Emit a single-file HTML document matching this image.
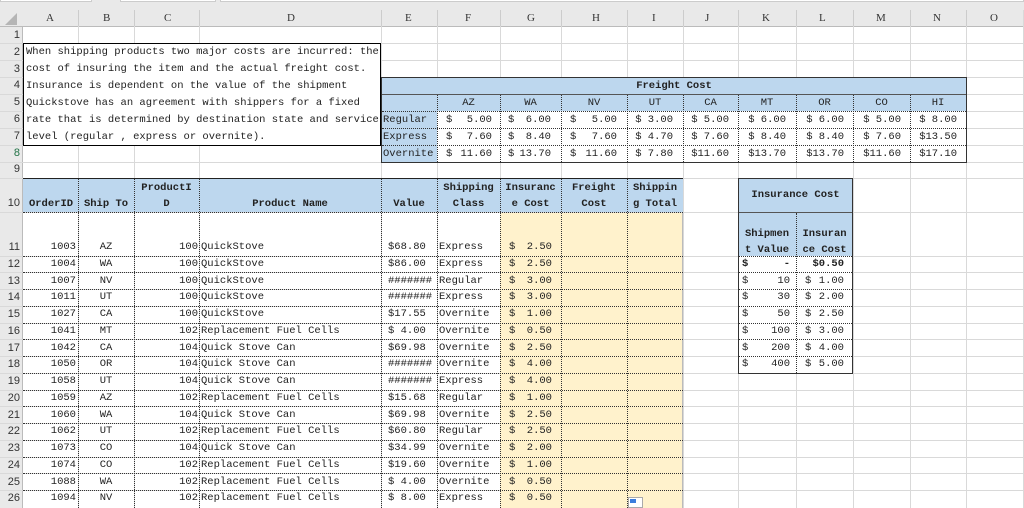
<!DOCTYPE html>
<html><head><meta charset="utf-8"><style>
*{margin:0;padding:0;box-sizing:border-box}
body{width:1024px;height:508px;overflow:hidden;background:#fff;position:relative;font-family:"Liberation Mono","Noto Sans CJK SC",monospace;font-size:10.5px;color:#222}
div{position:absolute}
.v{top:10px;height:498px;width:1px;background:#d9d9d9}
.h{left:0;width:1024px;height:1px;background:#d9d9d9}
.r{left:0;width:1024px;height:17px;line-height:17px;white-space:nowrap}
.r div{top:0;height:17px;white-space:pre}
.n{left:0;width:20px;text-align:right;color:#333;font-family:"Liberation Sans",sans-serif;font-size:11px}
.ca{left:23px;width:53px;text-align:right}
.cb{left:78px;width:56px;text-align:center}
.cc{left:134px;width:64px;text-align:right}
.cd{left:201px}
.ce{left:388px}
.cf{left:439px}
.gs{left:509px}
.gn{left:500px;width:52px;text-align:right}
.ks{left:742px}.kn{left:738px;width:52px;text-align:right}
.ls{left:805px}.ln{left:796px;width:48px;text-align:right}
.b{font-weight:bold}
.dv{width:0;border-left:1px dotted #333}
.dh{height:0;border-top:1px dotted #333}
.hd{font-weight:bold;text-align:center;line-height:16px;white-space:pre}
</style></head><body>
<div style="left:0;top:0;width:1024px;height:27px;background:#e9e9e9"></div>
<div style="left:0;top:0;width:92px;height:2px;background:#fff;border:1px solid #ccc;border-top:none"></div>
<div style="left:120px;top:0;width:96px;height:2px;background:#fff;border:1px solid #ccc;border-top:none"></div>
<div style="left:220px;top:0;width:804px;height:2px;background:#fff;border:1px solid #ccc;border-top:none"></div>
<div style="left:0;top:26px;width:1024px;height:1px;background:#bbb"></div>
<div style="left:0;top:27px;width:23px;height:481px;background:#e9e9e9;border-right:1px solid #bbb"></div>
<div style="left:5px;top:13px;width:0;height:0;border-left:12px solid transparent;border-bottom:12px solid #b5b5b5"></div>
<div class="v" style="left:78px"></div><div class="v" style="left:134px"></div><div class="v" style="left:199px"></div><div class="v" style="left:381px"></div><div class="v" style="left:437px"></div><div class="v" style="left:500px"></div><div class="v" style="left:561px"></div><div class="v" style="left:627px"></div><div class="v" style="left:683px"></div><div class="v" style="left:738px"></div><div class="v" style="left:796px"></div><div class="v" style="left:853px"></div><div class="v" style="left:910px"></div><div class="v" style="left:966px"></div><div class="v" style="left:1023px"></div>
<div class="h" style="top:43px"></div><div class="h" style="top:60px"></div><div class="h" style="top:77px"></div><div class="h" style="top:94px"></div><div class="h" style="top:111px"></div><div class="h" style="top:128px"></div><div class="h" style="top:145px"></div><div class="h" style="top:162px"></div><div class="h" style="top:178px"></div><div class="h" style="top:212px"></div><div class="h" style="top:256px"></div><div class="h" style="top:272px"></div><div class="h" style="top:289px"></div><div class="h" style="top:306px"></div><div class="h" style="top:323px"></div><div class="h" style="top:339px"></div><div class="h" style="top:356px"></div><div class="h" style="top:373px"></div><div class="h" style="top:390px"></div><div class="h" style="top:406px"></div><div class="h" style="top:423px"></div><div class="h" style="top:440px"></div><div class="h" style="top:457px"></div><div class="h" style="top:473px"></div><div class="h" style="top:490px"></div>
<div style="top:10px;left:23px;width:1001px;height:16px;line-height:16px;font-family:'Liberation Serif',serif;font-size:11px;color:#333">
<div style="left:23px;top:0">A</div><div style="left:80px;top:0">B</div><div style="left:141px;top:0">C</div><div style="left:264px;top:0">D</div><div style="left:382px;top:0">E</div><div style="left:442px;top:0">F</div><div style="left:504px;top:0">G</div><div style="left:569px;top:0">H</div><div style="left:629px;top:0">I</div><div style="left:682px;top:0">J</div><div style="left:739px;top:0">K</div><div style="left:796px;top:0">L</div><div style="left:853px;top:0">M</div><div style="left:910px;top:0">N</div><div style="left:967px;top:0">O</div></div>
<div style="left:78px;top:10px;width:1px;height:16px;background:#ccc"></div><div style="left:134px;top:10px;width:1px;height:16px;background:#ccc"></div><div style="left:199px;top:10px;width:1px;height:16px;background:#ccc"></div><div style="left:381px;top:10px;width:1px;height:16px;background:#ccc"></div><div style="left:437px;top:10px;width:1px;height:16px;background:#ccc"></div><div style="left:500px;top:10px;width:1px;height:16px;background:#ccc"></div><div style="left:561px;top:10px;width:1px;height:16px;background:#ccc"></div><div style="left:627px;top:10px;width:1px;height:16px;background:#ccc"></div><div style="left:683px;top:10px;width:1px;height:16px;background:#ccc"></div><div style="left:738px;top:10px;width:1px;height:16px;background:#ccc"></div><div style="left:796px;top:10px;width:1px;height:16px;background:#ccc"></div><div style="left:853px;top:10px;width:1px;height:16px;background:#ccc"></div><div style="left:910px;top:10px;width:1px;height:16px;background:#ccc"></div><div style="left:966px;top:10px;width:1px;height:16px;background:#ccc"></div>

<div style="left:23px;top:43px;width:358px;height:103px;background:#fff;border:1px solid #000;padding:0 0 0 2px;line-height:16.9px;white-space:pre;color:#222">When shipping products two major costs are incurred: the
cost of insuring the item and the actual freight cost.
Insurance is dependent on the value of the shipment
Quickstove has an agreement with shippers for a fixed
rate that is determined by destination state and service
level (regular , express or overnite).</div>

<div style="left:381px;top:77px;width:586px;height:86px;background:#fff;border:1px solid #333"></div>
<div style="left:382px;top:78px;width:584px;height:33px;background:#bdd7ee"></div>
<div style="left:382px;top:111px;width:55px;height:51px;background:#bdd7ee"></div>
<div style="left:382px;top:94px;width:584px;height:1px;background:#555"></div>
<div class="dh" style="left:382px;top:111px;width:584px"></div>
<div class="dh" style="left:382px;top:128px;width:584px"></div>
<div class="dh" style="left:382px;top:145px;width:584px"></div>
<div class="dv" style="left:437px;top:95px;height:67px"></div><div class="dv" style="left:500px;top:95px;height:67px"></div><div class="dv" style="left:561px;top:95px;height:67px"></div><div class="dv" style="left:627px;top:95px;height:67px"></div><div class="dv" style="left:683px;top:95px;height:67px"></div><div class="dv" style="left:738px;top:95px;height:67px"></div><div class="dv" style="left:796px;top:95px;height:67px"></div><div class="dv" style="left:853px;top:95px;height:67px"></div><div class="dv" style="left:910px;top:95px;height:67px"></div>
<div class="hd" style="left:381px;top:78px;width:586px">Freight Cost</div>
<div class="r" style="top:95px;text-align:center"><div style="left:437px;width:63px">AZ</div><div style="left:500px;width:61px">WA</div><div style="left:561px;width:66px">NV</div><div style="left:627px;width:56px">UT</div><div style="left:683px;width:55px">CA</div><div style="left:738px;width:58px">MT</div><div style="left:796px;width:57px">OR</div><div style="left:853px;width:57px">CO</div><div style="left:910px;width:56px">HI</div></div>
<div class="r" style="top:112px"><div style="left:383px">Regular</div><div style="left:446px">$</div><div style="left:437px;width:55px;text-align:right">5.00</div><div style="left:508px">$</div><div style="left:500px;width:51px;text-align:right">6.00</div><div style="left:570px">$</div><div style="left:561px;width:56px;text-align:right">5.00</div><div style="left:627px;width:46px;text-align:right">$ 3.00</div><div style="left:683px;width:46px;text-align:right">$ 5.00</div><div style="left:738px;width:48px;text-align:right">$ 6.00</div><div style="left:796px;width:48px;text-align:right">$ 6.00</div><div style="left:853px;width:48px;text-align:right">$ 5.00</div><div style="left:910px;width:47px;text-align:right">$ 8.00</div></div>
<div class="r" style="top:129px"><div style="left:383px">Express</div><div style="left:446px">$</div><div style="left:437px;width:55px;text-align:right">7.60</div><div style="left:508px">$</div><div style="left:500px;width:51px;text-align:right">8.40</div><div style="left:570px">$</div><div style="left:561px;width:56px;text-align:right">7.60</div><div style="left:627px;width:46px;text-align:right">$ 4.70</div><div style="left:683px;width:46px;text-align:right">$ 7.60</div><div style="left:738px;width:48px;text-align:right">$ 8.40</div><div style="left:796px;width:48px;text-align:right">$ 8.40</div><div style="left:853px;width:48px;text-align:right">$ 7.60</div><div style="left:910px;width:47px;text-align:right">$13.50</div></div>
<div class="r" style="top:146px"><div style="left:383px">Overnite</div><div style="left:446px">$</div><div style="left:437px;width:55px;text-align:right">11.60</div><div style="left:508px">$</div><div style="left:500px;width:51px;text-align:right">13.70</div><div style="left:570px">$</div><div style="left:561px;width:56px;text-align:right">11.60</div><div style="left:627px;width:46px;text-align:right">$ 7.80</div><div style="left:683px;width:46px;text-align:right">$11.60</div><div style="left:738px;width:48px;text-align:right">$13.70</div><div style="left:796px;width:48px;text-align:right">$13.70</div><div style="left:853px;width:48px;text-align:right">$11.60</div><div style="left:910px;width:47px;text-align:right">$17.10</div></div>

<div style="left:23px;top:178px;width:660px;height:34px;background:#bdd7ee;border-top:1px solid #222"></div>
<div style="left:500px;top:213px;width:183px;height:295px;background:#fff2cc"></div>
<div style="left:682px;top:212px;width:1px;height:296px;background:#bbb"></div>
<div class="dv" style="left:78px;top:179px;height:329px"></div><div class="dv" style="left:134px;top:179px;height:329px"></div><div class="dv" style="left:199px;top:179px;height:329px"></div><div class="dv" style="left:381px;top:179px;height:329px"></div><div class="dv" style="left:437px;top:179px;height:329px"></div><div class="dv" style="left:500px;top:179px;height:329px"></div><div class="dv" style="left:561px;top:179px;height:329px"></div><div class="dv" style="left:627px;top:179px;height:329px"></div>
<div class="dh" style="left:23px;top:212px;width:660px"></div><div class="dh" style="left:23px;top:256px;width:660px"></div><div class="dh" style="left:23px;top:272px;width:660px"></div><div class="dh" style="left:23px;top:289px;width:660px"></div><div class="dh" style="left:23px;top:306px;width:660px"></div><div class="dh" style="left:23px;top:323px;width:660px"></div><div class="dh" style="left:23px;top:339px;width:660px"></div><div class="dh" style="left:23px;top:356px;width:660px"></div><div class="dh" style="left:23px;top:373px;width:660px"></div><div class="dh" style="left:23px;top:390px;width:660px"></div><div class="dh" style="left:23px;top:406px;width:660px"></div><div class="dh" style="left:23px;top:423px;width:660px"></div><div class="dh" style="left:23px;top:440px;width:660px"></div><div class="dh" style="left:23px;top:457px;width:660px"></div><div class="dh" style="left:23px;top:473px;width:660px"></div><div class="dh" style="left:23px;top:490px;width:660px"></div>
<div class="hd" style="left:23px;top:196px;width:56px">OrderID</div>
<div class="hd" style="left:78px;top:196px;width:56px">Ship To</div>
<div class="hd" style="left:134px;top:180px;width:65px">ProductI
D</div>
<div class="hd" style="left:199px;top:196px;width:182px">Product Name</div>
<div class="hd" style="left:381px;top:196px;width:56px">Value</div>
<div class="hd" style="left:437px;top:180px;width:63px">Shipping
Class</div>
<div class="hd" style="left:500px;top:180px;width:61px">Insuranc
e Cost</div>
<div class="hd" style="left:561px;top:180px;width:66px">Freight
Cost</div>
<div class="hd" style="left:627px;top:180px;width:56px">Shippin
g Total</div>

<div style="left:738px;top:178px;width:115px;height:196px;border:1px solid #333;background:#fff"></div>
<div style="left:739px;top:179px;width:113px;height:77px;background:#bdd7ee"></div>
<div style="left:739px;top:212px;width:113px;height:1px;background:#555"></div>
<div class="dv" style="left:796px;top:213px;height:160px"></div>
<div class="dh" style="left:739px;top:256px;width:113px"></div><div class="dh" style="left:739px;top:272px;width:113px"></div><div class="dh" style="left:739px;top:289px;width:113px"></div><div class="dh" style="left:739px;top:306px;width:113px"></div><div class="dh" style="left:739px;top:323px;width:113px"></div><div class="dh" style="left:739px;top:339px;width:113px"></div><div class="dh" style="left:739px;top:356px;width:113px"></div>
<div class="hd" style="left:738px;top:187px;width:115px">Insurance Cost</div>
<div class="hd" style="left:738px;top:226px;width:58px">Shipmen
t Value</div>
<div class="hd" style="left:796px;top:226px;width:57px">Insuran
ce Cost</div>

<div class="r" style="top:27px"><div class="n">1</div></div>
<div class="r" style="top:44px"><div class="n">2</div></div>
<div class="r" style="top:61px"><div class="n">3</div></div>
<div class="r" style="top:77px"><div class="n">4</div></div>
<div class="r" style="top:94px"><div class="n">5</div></div>
<div class="r" style="top:111px"><div class="n">6</div></div>
<div class="r" style="top:128px"><div class="n">7</div></div>
<div class="r" style="top:145px"><div class="n" style="color:#217346">8</div></div>
<div class="r" style="top:161px"><div class="n">9</div></div>
<div class="r" style="top:195px"><div class="n">10</div></div>

<div class="r" style="top:239px"><div class="n">11</div><div class="ca">1003</div><div class="cb">AZ</div><div class="cc">100</div><div class="cd">QuickStove</div><div class="ce">$68.80</div><div class="cf">Express</div><div class="gs">$</div><div class="gn">2.50</div></div>
<div class="r" style="top:256px"><div class="n">12</div><div class="ca">1004</div><div class="cb">WA</div><div class="cc">100</div><div class="cd">QuickStove</div><div class="ce">$86.00</div><div class="cf">Express</div><div class="gs">$</div><div class="gn">2.50</div><div class="ks b">$</div><div class="kn b">-</div><div class="ln b">$0.50</div></div>
<div class="r" style="top:273px"><div class="n">13</div><div class="ca">1007</div><div class="cb">NV</div><div class="cc">100</div><div class="cd">QuickStove</div><div class="ce">#######</div><div class="cf">Regular</div><div class="gs">$</div><div class="gn">3.00</div><div class="ks">$</div><div class="kn">10</div><div class="ls">$</div><div class="ln">1.00</div></div>
<div class="r" style="top:289px"><div class="n">14</div><div class="ca">1011</div><div class="cb">UT</div><div class="cc">100</div><div class="cd">QuickStove</div><div class="ce">#######</div><div class="cf">Express</div><div class="gs">$</div><div class="gn">3.00</div><div class="ks">$</div><div class="kn">30</div><div class="ls">$</div><div class="ln">2.00</div></div>
<div class="r" style="top:306px"><div class="n">15</div><div class="ca">1027</div><div class="cb">CA</div><div class="cc">100</div><div class="cd">QuickStove</div><div class="ce">$17.55</div><div class="cf">Overnite</div><div class="gs">$</div><div class="gn">1.00</div><div class="ks">$</div><div class="kn">50</div><div class="ls">$</div><div class="ln">2.50</div></div>
<div class="r" style="top:323px"><div class="n">16</div><div class="ca">1041</div><div class="cb">MT</div><div class="cc">102</div><div class="cd">Replacement Fuel Cells</div><div class="ce">$ 4.00</div><div class="cf">Overnite</div><div class="gs">$</div><div class="gn">0.50</div><div class="ks">$</div><div class="kn">100</div><div class="ls">$</div><div class="ln">3.00</div></div>
<div class="r" style="top:340px"><div class="n">17</div><div class="ca">1042</div><div class="cb">CA</div><div class="cc">104</div><div class="cd">Quick Stove Can</div><div class="ce">$69.98</div><div class="cf">Overnite</div><div class="gs">$</div><div class="gn">2.50</div><div class="ks">$</div><div class="kn">200</div><div class="ls">$</div><div class="ln">4.00</div></div>
<div class="r" style="top:356px"><div class="n">18</div><div class="ca">1050</div><div class="cb">OR</div><div class="cc">104</div><div class="cd">Quick Stove Can</div><div class="ce">#######</div><div class="cf">Overnite</div><div class="gs">$</div><div class="gn">4.00</div><div class="ks">$</div><div class="kn">400</div><div class="ls">$</div><div class="ln">5.00</div></div>
<div class="r" style="top:373px"><div class="n">19</div><div class="ca">1058</div><div class="cb">UT</div><div class="cc">104</div><div class="cd">Quick Stove Can</div><div class="ce">#######</div><div class="cf">Express</div><div class="gs">$</div><div class="gn">4.00</div></div>
<div class="r" style="top:390px"><div class="n">20</div><div class="ca">1059</div><div class="cb">AZ</div><div class="cc">102</div><div class="cd">Replacement Fuel Cells</div><div class="ce">$15.68</div><div class="cf">Regular</div><div class="gs">$</div><div class="gn">1.00</div></div>
<div class="r" style="top:407px"><div class="n">21</div><div class="ca">1060</div><div class="cb">WA</div><div class="cc">104</div><div class="cd">Quick Stove Can</div><div class="ce">$69.98</div><div class="cf">Overnite</div><div class="gs">$</div><div class="gn">2.50</div></div>
<div class="r" style="top:423px"><div class="n">22</div><div class="ca">1062</div><div class="cb">UT</div><div class="cc">102</div><div class="cd">Replacement Fuel Cells</div><div class="ce">$60.80</div><div class="cf">Regular</div><div class="gs">$</div><div class="gn">2.50</div></div>
<div class="r" style="top:440px"><div class="n">23</div><div class="ca">1073</div><div class="cb">CO</div><div class="cc">104</div><div class="cd">Quick Stove Can</div><div class="ce">$34.99</div><div class="cf">Overnite</div><div class="gs">$</div><div class="gn">2.00</div></div>
<div class="r" style="top:457px"><div class="n">24</div><div class="ca">1074</div><div class="cb">CO</div><div class="cc">102</div><div class="cd">Replacement Fuel Cells</div><div class="ce">$19.60</div><div class="cf">Overnite</div><div class="gs">$</div><div class="gn">1.00</div></div>
<div class="r" style="top:474px"><div class="n">25</div><div class="ca">1088</div><div class="cb">WA</div><div class="cc">102</div><div class="cd">Replacement Fuel Cells</div><div class="ce">$ 4.00</div><div class="cf">Overnite</div><div class="gs">$</div><div class="gn">0.50</div></div>
<div class="r" style="top:490px"><div class="n">26</div><div class="ca">1094</div><div class="cb">NV</div><div class="cc">102</div><div class="cd">Replacement Fuel Cells</div><div class="ce">$ 8.00</div><div class="cf">Express</div><div class="gs">$</div><div class="gn">0.50</div></div>

<div style="left:628px;top:497px;width:15px;height:11px;background:#fff;border:1px solid #aaa"></div>
<div style="left:630px;top:499px;width:6px;height:4px;background:#3b7ddd"></div>
</body></html>
